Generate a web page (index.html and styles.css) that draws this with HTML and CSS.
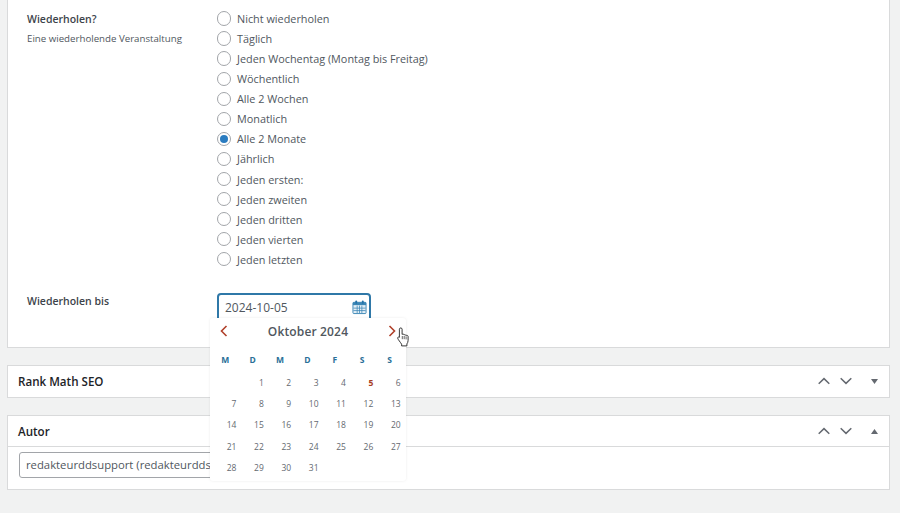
FILE: index.html
```html
<!DOCTYPE html>
<html lang="de">
<head>
    <meta charset="UTF-8">
    <title>Veranstaltung bearbeiten</title>
    <link rel="stylesheet" href="styles.css">
</head>
<body>

    <section class="panel panel-repeat">
        <div class="field-row">
            <div class="field-label">
                <h4>Wiederholen?</h4>
                <p>Eine wiederholende Veranstaltung</p>
            </div>
            <div class="radio-list">
                <label><input type="radio" name="repeat"> Nicht wiederholen</label>
                <label><input type="radio" name="repeat"> Täglich</label>
                <label><input type="radio" name="repeat"> Jeden Wochentag (Montag bis Freitag)</label>
                <label><input type="radio" name="repeat"> Wöchentlich</label>
                <label><input type="radio" name="repeat"> Alle 2 Wochen</label>
                <label><input type="radio" name="repeat"> Monatlich</label>
                <label><input type="radio" name="repeat" checked> Alle 2 Monate</label>
                <label><input type="radio" name="repeat"> Jährlich</label>
                <label><input type="radio" name="repeat"> Jeden ersten:</label>
                <label><input type="radio" name="repeat"> Jeden zweiten</label>
                <label><input type="radio" name="repeat"> Jeden dritten</label>
                <label><input type="radio" name="repeat"> Jeden vierten</label>
                <label><input type="radio" name="repeat"> Jeden letzten</label>
            </div>
        </div>

        <div class="field-row until-row">
            <div class="field-label">
                <h4>Wiederholen bis</h4>
            </div>
            <div class="date-field">
                <div class="date-input">
                    <span>2024-10-05</span>
                    <svg class="cal-icon" width="15" height="16" viewBox="0 0 16 16">
                        <rect x="1" y="3" width="14" height="12" rx="1" fill="#e3eff6" stroke="#3b86b5"/>
                        <rect x="1" y="3" width="14" height="3" fill="#3b86b5"/>
                        <rect x="3.5" y="1" width="2" height="3.5" rx="1" fill="#2271a8"/>
                        <rect x="10.5" y="1" width="2" height="3.5" rx="1" fill="#2271a8"/>
                        <path d="M5.5 6.5v8M8 6.5v8M10.5 6.5v8M1.5 9.2h13M1.5 11.8h13" stroke="#3b86b5" stroke-width=".8" fill="none"/>
                    </svg>
                </div>

                <div class="datepicker">
                    <div class="dp-head">
                        <svg width="8" height="12" viewBox="0 0 8 12"><path d="M6.5 1 1.5 6l5 5" fill="none" stroke="#b0402a" stroke-width="1.6"/></svg>
                        <span class="dp-title">Oktober 2024</span>
                        <svg width="8" height="12" viewBox="0 0 8 12"><path d="M1.5 1l5 5-5 5" fill="none" stroke="#b0402a" stroke-width="1.6"/></svg>
                    </div>
                    <div class="dp-grid dp-weekdays">
                        <span>M</span><span>D</span><span>M</span><span>D</span><span>F</span><span>S</span><span>S</span>
                    </div>
                    <div class="dp-grid dp-days">
                        <span></span><span>1</span><span>2</span><span>3</span><span>4</span><span class="today">5</span><span>6</span>
                        <span>7</span><span>8</span><span>9</span><span>10</span><span>11</span><span>12</span><span>13</span>
                        <span>14</span><span>15</span><span>16</span><span>17</span><span>18</span><span>19</span><span>20</span>
                        <span>21</span><span>22</span><span>23</span><span>24</span><span>25</span><span>26</span><span>27</span>
                        <span>28</span><span>29</span><span>30</span><span>31</span>
                    </div>
                    <svg class="hand-cursor" width="13" height="20" viewBox="0 0 13 20">
                        <path d="M2.4 2.2c0-1.7 2.7-1.7 2.7 0v5.2c.9-.5 1.8-.3 2 .5.8-.5 1.6-.2 1.8.6.9-.5 2-.1 2.2.9v4c0 1.6-.6 2.6-1.2 3.5v2H4.6v-1.7C3.4 15.2 1 12.6.7 11.2c-.2-1 .9-1.6 1.7-.9z" fill="#fff" stroke="#222" stroke-width=".9"/>
                        <path d="M5.3 9v3.2M7.2 9v3.2M9.1 9.4v3" stroke="#222" stroke-width=".7" fill="none"/>
                    </svg>
                </div>
            </div>
        </div>
    </section>

    <section class="panel">
        <div class="panel-head no-line">
            <h2>Rank Math SEO</h2>
            <div class="panel-actions">
                <svg width="12" height="8" viewBox="0 0 12 8"><path d="M.7 6.8 6 1.6l5.3 5.2" fill="none" stroke="#646970" stroke-width="1.5"/></svg>
                <svg width="12" height="8" viewBox="0 0 12 8"><path d="M.7 1.2 6 6.4l5.3-5.2" fill="none" stroke="#646970" stroke-width="1.5"/></svg>
                <svg class="toggle" width="7" height="5" viewBox="0 0 7 5"><path d="M0 0h7L3.5 5z" fill="#646970"/></svg>
            </div>
        </div>
    </section>

    <section class="panel">
        <div class="panel-head line">
            <h2>Autor</h2>
            <div class="panel-actions">
                <svg width="12" height="8" viewBox="0 0 12 8"><path d="M.7 6.8 6 1.6l5.3 5.2" fill="none" stroke="#646970" stroke-width="1.5"/></svg>
                <svg width="12" height="8" viewBox="0 0 12 8"><path d="M.7 1.2 6 6.4l5.3-5.2" fill="none" stroke="#646970" stroke-width="1.5"/></svg>
                <svg class="toggle" width="7" height="5" viewBox="0 0 7 5"><path d="M0 5h7L3.5 0z" fill="#646970"/></svg>
            </div>
        </div>
        <div class="panel-body">
            <div class="author-select">redakteurddsupport (redakteurdds</div>
        </div>
    </section>

</body>
</html>
```

FILE: styles.css
```css
* {
    margin: 0;
    padding: 0;
    box-sizing: border-box;
}

html, body {
    height: 513px;
    overflow: hidden;
}

body {
    background: #f1f2f2;
    color: #50575e;
    font-family: 'Open Sans', 'Noto Sans', sans-serif;
    font-size: 10.85px;
    padding: 0 10px 0 7px;
}

.panel {
    background: #fff;
    border: 1px solid #d9dadb;
    margin-bottom: 17px;
}

.panel-repeat {
    border-top: none;
    height: 348px;
    padding: 9px 19px 0;
}

.field-row {
    display: grid;
    grid-template-columns: 190px 1fr;
}

.field-label h4 {
    font-size: 10.5px;
    font-weight: 600;
    line-height: 20px;
    color: #3c434a;
}

.field-label p {
    font-size: 9.7px;
    line-height: 20px;
    color: #50575e;
}

.radio-list {
    margin-top: -0.4px;
}

.radio-list label {
    display: flex;
    align-items: center;
    gap: 6px;
    height: 20.05px;
}

input[type=radio] {
    appearance: none;
    width: 14.5px;
    height: 14.5px;
    margin-left: -0.5px;
    border: 1px solid #a2a5a9;
    border-radius: 50%;
    background: #fff;
    display: grid;
    place-items: center;
}

input[type=radio]:checked::before {
    content: "";
    width: 8px;
    height: 8px;
    border-radius: 50%;
    background: #2a7cc0;
}

.until-row {
    margin-top: 23.4px;
}

.until-row .field-label h4 {
    line-height: 16px;
}

.date-field {
    position: relative;
    width: 154px;
}

.date-input {
    display: flex;
    justify-content: space-between;
    align-items: center;
    height: 32px;
    padding: 3px 2px 5px 6px;
    border: 2px solid #2f78a8;
    border-radius: 4px;
    background: #fff;
    font-size: 12px;
    color: #50575e;
}

.cal-icon {
    margin-top: -2px;
}

.datepicker {
    position: absolute;
    left: -7px;
    top: 25px;
    width: 196px;
    height: 163px;
    background: #fff;
    border-radius: 3px;
    box-shadow: 0 0 3px rgba(0, 0, 0, 0.08);
    z-index: 5;
}

.dp-head {
    display: flex;
    justify-content: space-between;
    align-items: center;
    height: 26px;
    padding: 0 10px;
}

.dp-title {
    font-size: 12px;
    font-weight: 600;
    letter-spacing: 0.15px;
    color: #50575e;
    padding-top: 1px;
}

.dp-grid {
    display: grid;
    grid-template-columns: repeat(7, 27.4px);
    padding-left: 1.5px;
}

.dp-weekdays {
    margin-top: 5px;
    height: 21px;
    line-height: 21px;
    text-align: center;
    font-size: 8.5px;
    font-weight: 700;
    color: #2a7098;
}

.dp-days {
    margin-top: 2.4px;
    grid-auto-rows: 21.2px;
    line-height: 21.2px;
    text-align: right;
    font-size: 8.5px;
    color: #646970;
}

.dp-days span {
    padding-right: 2.5px;
}

.dp-days .today {
    color: #a8401f;
    font-weight: 700;
}

.hand-cursor {
    position: absolute;
    left: 187px;
    top: 9px;
}

.panel-head {
    display: flex;
    justify-content: space-between;
    align-items: center;
    height: 31px;
    padding: 0 11px 1px 10px;
}

.panel-head.line {
    padding-bottom: 0;
    border-bottom: 1px solid #d9dadb;
}

.panel-head h2 {
    font-size: 11.6px;
    font-weight: 600;
    color: #1d2327;
}

.panel-actions {
    display: flex;
    align-items: center;
    gap: 10px;
}

.panel-actions .toggle {
    margin-left: 9px;
}

.panel-body {
    padding: 5px 11px 11px;
}

.author-select {
    width: 240px;
    height: 26px;
    line-height: 24px;
    padding-left: 6px;
    border: 1px solid #a2a5a9;
    border-radius: 3px;
    font-size: 11.3px;
    color: #50575e;
    white-space: nowrap;
    overflow: hidden;
}
```
